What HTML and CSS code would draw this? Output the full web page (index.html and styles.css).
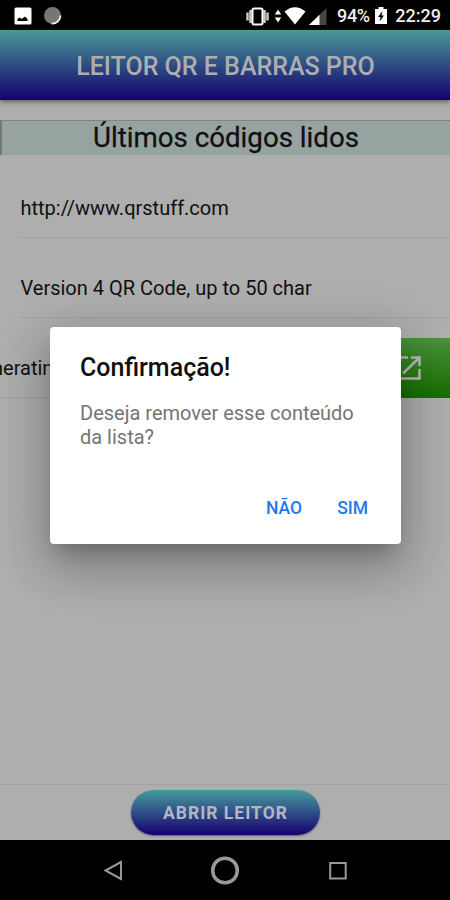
FILE: index.html
```html
<!DOCTYPE html>
<html lang="pt-BR">
<head>
<meta charset="utf-8">
<title>Leitor QR e Barras Pro</title>
<link rel="stylesheet" href="styles.css">
</head>
<body>
<div class="status">
  <svg class="status-left" width="50" height="20" viewBox="0 0 50 20">
    <rect x="0.5" y="1.500" width="17" height="17" rx="1.5" fill="#fff"/>
    <path d="M3.500 15v-2l2-1.500 2 1.500 3.500-2.500 2.500 2.500V15z" fill="#000"/>
    <circle cx="38.500" cy="9.500" r="8.500" fill="#777"/>
    <path d="M46.500 9.500A8.200 8.200 0 0 1 37.500 17.500" fill="none" stroke="#eee" stroke-width="1.800"/>
  </svg>
  <svg class="status-right" width="82" height="20" viewBox="0 0 82 20">
    <g fill="none" stroke="#ccc"><path d="M1.500 6.500v8M4.500 4v13M21.500 6.500v8M18.500 4v13" stroke-width="2.500"/></g>
    <rect x="6.500" y="2.500" width="10" height="16" rx="1.500" fill="#000" stroke="#fff" stroke-width="2"/>
    <path d="M28.800 8.500l3.200-5 3.200 5zM28.800 11.500h6.400l-3.200 5z" fill="#fff"/>
    <path d="M38.500 5.500Q49 -3 59.500 5.500L49 18.500z" fill="#fff"/>
    <path d="M63 19L80.500 2v17z" fill="#444"/><path d="M63 19L73.500 8.800V19z" fill="#fff"/>
  </svg>
  <span class="percent">94%</span>
  <svg class="battery" width="12" height="17" viewBox="0 0 12 17">
    <path d="M0 2h3.500V0h5v2H12v15H0z" fill="#fff"/><path d="M7.500 4L3 10h2.500L4.500 14.500 9 8.500H6.500z" fill="#000"/>
  </svg>
  <span class="clock">22:29</span>
</div>
<header class="toolbar"><span>LEITOR QR E BARRAS PRO</span></header>
<main class="content">
  <h2 class="section"><span>Últimos códigos lidos</span></h2>
  <div class="item"><span class="url">http://www.qrstuff.com</span></div>
  <div class="item"><span class="version">Version 4 QR Code, up to 50 char</span></div>
  <div class="item slid">
    <span class="label">neratin</span>
    <div class="open">
      <svg width="26" height="26" viewBox="0 0 26 26" fill="none" stroke="#bbb" stroke-width="2.500">
        <path d="M11 2.500H2.500v21h20V14M14 2.500h8.500V11M21.500 3.500L6 18.500"/>
      </svg>
    </div>
  </div>
</main>
<footer class="footer"><button class="scan">ABRIR LEITOR</button></footer>
<nav class="navbar">
  <svg width="450" height="60" viewBox="0 0 450 60" fill="none" stroke="#999" stroke-width="2">
    <path d="M121 22v17L105.500 30.500z"/>
    <circle cx="225" cy="30.500" r="12.300" stroke-width="3.500"/>
    <rect x="330.200" y="23" width="15.500" height="15.500"/>
  </svg>
</nav>
<div class="dialog">
  <h3><span>Confirmação!</span></h3>
  <p>Deseja remover esse conteúdo<br>da lista?</p>
  <div class="actions"><span class="no">NÃO</span><span class="yes">SIM</span></div>
</div>
</body>
</html>
```
FILE: styles.css
```css
* { box-sizing: border-box; }
body {
  margin: 0;
  width: 450px;
  height: 900px;
  overflow: hidden;
  position: relative;
  display: flex;
  flex-direction: column;
  background: #aeaeae;
  font-family: Roboto, "Liberation Sans", sans-serif;
  color: #101010;
}
svg { display: block; flex: none; }
.status {
  height: 30px;
  flex: none;
  display: flex;
  align-items: center;
  background: #000;
  color: #eee;
  font-size: 18px;
  font-weight: 500;
  padding: 1px 9px 0 14px;
}
.status-right { margin-left: 182px; }
.percent { margin-left: 9px; width: 33px; letter-spacing: -0.3px; }
.battery { margin-left: 5px; }
.clock { margin-left: auto; }
.toolbar {
  height: 70px;
  flex: none;
  display: flex;
  align-items: center;
  justify-content: center;
  padding: 2px 0 0 1px;
  background: linear-gradient(#489999, #15006e);
  box-shadow: 0 2px 5px rgba(0, 0, 0, 0.45);
  color: #aeaeae;
  font-size: 25px;
  font-weight: 500;
  white-space: nowrap;
}
.content { flex: 1; padding-top: 20px; }
.section {
  height: 35px;
  margin: 0 0 12px;
  border-top: 1px solid #7c8584;
  border-left: 2px solid #717a79;
  background: #96a3a0;
  text-align: center;
  font-size: 27.7px;
  font-weight: 400;
  line-height: 34px;
  -webkit-text-stroke: 0.3px #101010;
}
.item {
  height: 71px;
  margin: 0 0 9px 20px;
  display: flex;
  align-items: center;
  border-bottom: 1px solid #a0a0a0;
  font-size: 20px;
  white-space: nowrap;
}
.item span { margin: 12px 0 0 0.5px; }
.slid { height: 60px; margin: 20px 0 0; }
.slid .label { margin: 1px 0 0 -8px; }
.open {
  margin-left: auto;
  width: 80px;
  height: 60px;
  padding: 17px 0 0 27px;
  background: linear-gradient(#489439, #176c00);
}
.footer {
  height: 56px;
  flex: none;
  border-top: 1px solid #a2a2a2;
  padding: 5px 0 0 1px;
  text-align: center;
}
.scan {
  width: 189px;
  height: 45px;
  padding: 0;
  border: 0;
  border-radius: 23px;
  background: linear-gradient(#459c9e, #17006f);
  box-shadow: 0 1px 2px rgba(0, 0, 0, 0.45);
  color: #b4b6c3;
  font: 700 17.5px Roboto, sans-serif;
  letter-spacing: 1px;
  white-space: nowrap;
}
.navbar { height: 60px; flex: none; background: #000; }
.dialog {
  position: absolute;
  left: 50px;
  top: 327px;
  width: 351px;
  height: 217px;
  padding: 25px 30px;
  border-radius: 4px;
  background: #fff;
  box-shadow: 0 14px 19px -9px rgba(0, 0, 0, 0.22),
    0 25px 48px 4px rgba(0, 0, 0, 0.16),
    0 11px 50px 8px rgba(0, 0, 0, 0.14);
}
.dialog h3 { margin: 0; font-size: 25px; font-weight: 500; line-height: 32px; }
.dialog p {
  margin: 18px 0 0;
  color: #757575;
  font-size: 20px;
  line-height: 23.5px;
  white-space: nowrap;
}
.actions {
  display: flex;
  justify-content: flex-end;
  gap: 35px;
  margin-top: 49px;
  padding-right: 3px;
  color: #2478ed;
  font-size: 17.5px;
  font-weight: 500;
  line-height: 20px;
}
```
